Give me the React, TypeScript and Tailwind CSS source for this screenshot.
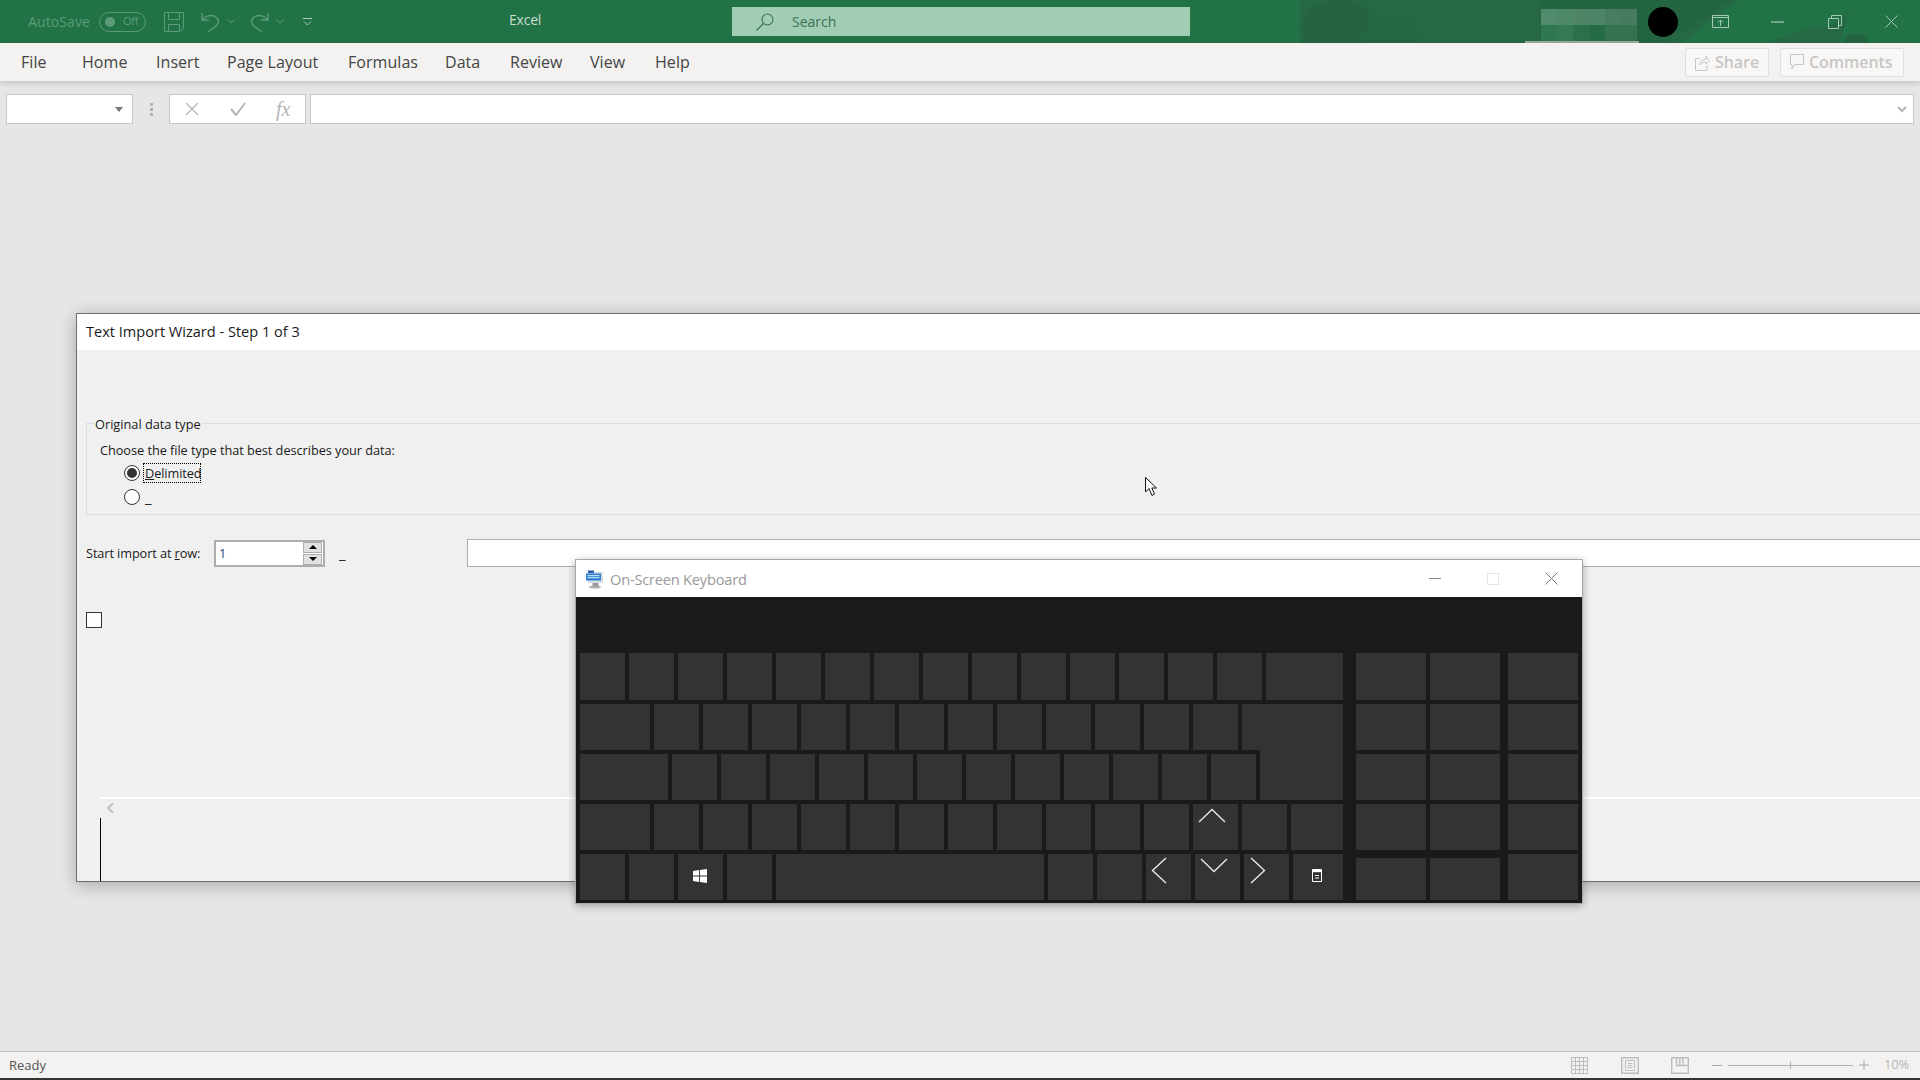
import React from "react";

const FONT = "[font-family:'Open_Sans','Noto_Sans',sans-serif]";

function Key({ w, h = "h-full", extra = "", children }: { w: string; h?: string; extra?: string; children?: React.ReactNode }) {
  return <div className={`relative shrink-0 bg-[#333333] ${w} ${h} ${extra}`}>{children}</div>;
}

const range = (n: number) => Array.from({ length: n }, (_, i) => i);

function Numpad({ short = false }: { short?: boolean }) {
  return (
    <>
      <Key w="w-[70px]" h={short ? "h-[42px]" : "h-full"} extra={short ? "ml-[9px] mt-[4px]" : "ml-[9px]"} />
      <Key w="w-[70px]" h={short ? "h-[42px]" : "h-full"} extra={short ? "mt-[4px]" : ""} />
      <Key w="w-[70px]" extra="ml-[4px]" />
    </>
  );
}

function Keyboard() {
  return (
    <div className="absolute left-[575px] top-[559px] z-20 flex h-[345px] w-[1008px] flex-col border border-[#a9a9a9] shadow-[0_2px_8px_rgba(0,0,0,0.3)]">
      <div className="flex h-[37px] shrink-0 items-center bg-white">
        <svg viewBox="0 0 20 20" className="ml-[9px] h-[20px] w-[20px]">
          <ellipse cx="10" cy="18" rx="6" ry="1.6" fill="#b5b5b5" />
          <rect x="7.5" y="13" width="6" height="4.5" fill="#9a9a9a" />
          <rect x="3" y="3" width="15" height="11" fill="#d7dde3" />
          <rect x="1" y="4.5" width="15" height="7" fill="#2d7fd4" />
          <rect x="2.5" y="6" width="12" height="1.2" fill="#bcdcf6" />
          <rect x="2.5" y="8" width="12" height="1.2" fill="#bcdcf6" />
          <rect x="3" y="1.5" width="6" height="2.5" fill="#2a5da8" />
        </svg>
        <span className={`ml-[5px] mt-[1px] w-[136px] shrink-0 whitespace-nowrap text-[14.6px] leading-none tracking-[-0.2px] text-[#9a9a9a] ${FONT}`}>On-Screen Keyboard</span>
        <svg viewBox="0 0 12 12" className="ml-[683px] h-[12px] w-[12px]">
          <path d="M0 5.5H12" stroke="#8a8a8a" strokeWidth="1" />
        </svg>
        <div className="ml-[46px] h-[12px] w-[12px] border border-[#e3e3e3]" />
        <svg viewBox="0 0 13 13" className="ml-[46px] h-[13px] w-[13px]">
          <path d="M0.5 0.5L12.5 12.5M12.5 0.5L0.5 12.5" stroke="#777" strokeWidth="1" />
        </svg>
      </div>
      <div className="flex flex-1 flex-col gap-[4px] bg-[#1a1a1a] pl-[4px] pt-[56px]">
        <div className="flex h-[47px] gap-[4px]">
          {range(14).map((i) => <Key key={i} w="w-[45px]" />)}
          <Key w="w-[77px]" />
          <Numpad />
        </div>
        <div className="flex h-[46px] gap-[4px]">
          <Key w="w-[70px]" />
          {range(12).map((i) => <Key key={i} w="w-[45px]" />)}
          <Key w="w-[101px]" />
          <Numpad />
        </div>
        <div className="flex h-[46px] gap-[4px]">
          <Key w="w-[88px]" />
          {range(12).map((i) => <Key key={i} w="w-[45px]" />)}
          <Key w="w-[83px]" h="h-[50px]" extra="-mt-[4px]" />
          <Numpad />
        </div>
        <div className="flex h-[46px] gap-[4px]">
          <Key w="w-[70px]" />
          {range(11).map((i) => <Key key={i} w="w-[45px]" />)}
          <Key w="w-[45px]">
            <svg viewBox="0 0 28 15" className="absolute left-[5px] top-[4px] h-[15px] w-[28px]">
              <path d="M1 14L14 1.5L27 14" fill="none" stroke="#e8e8e8" strokeWidth="1.4" />
            </svg>
          </Key>
          <Key w="w-[45px]" />
          <Key w="w-[52px]" />
          <Numpad />
        </div>
        <div className="flex h-[46px] gap-[4px]">
          {range(2).map((i) => <Key key={i} w="w-[45px]" />)}
          <Key w="w-[45px]">
            <svg viewBox="0 0 14 14" className="absolute left-[15px] top-[15px] h-[14px] w-[14px]">
              <path d="M0 2L6 1.1V6.6H0ZM6.9 1L14 0V6.6H6.9ZM0 7.4H6V12.9L0 12ZM6.9 7.4H14V14L6.9 13Z" fill="#fff" />
            </svg>
          </Key>
          <Key w="w-[45px]" />
          <Key w="w-[268px]" />
          <Key w="w-[45px]" />
          <Key w="w-[45px]" />
          <Key w="w-[45px]">
            <svg viewBox="0 0 16 27" className="absolute left-[5px] top-[3px] h-[27px] w-[16px]">
              <path d="M15 1L1.5 13.5L15 26" fill="none" stroke="#e8e8e8" strokeWidth="1.4" />
            </svg>
          </Key>
          <Key w="w-[45px]">
            <svg viewBox="0 0 28 15" className="absolute left-[5px] top-[4px] h-[15px] w-[28px]">
              <path d="M1 1L14 13.5L27 1" fill="none" stroke="#e8e8e8" strokeWidth="1.4" />
            </svg>
          </Key>
          <Key w="w-[45px]">
            <svg viewBox="0 0 16 27" className="absolute left-[6px] top-[3px] h-[27px] w-[16px]">
              <path d="M1 1L14.5 13.5L1 26" fill="none" stroke="#e8e8e8" strokeWidth="1.4" />
            </svg>
          </Key>
          <Key w="w-[50px]">
            <svg viewBox="0 0 10 13" className="absolute left-[19px] top-[15px] h-[13px] w-[10px]">
              <path d="M0.5 0.5H9.5V12.5H0.5Z" fill="none" stroke="#fff" strokeWidth="1" />
              <path d="M0.5 1H9.5V3.2H0.5Z" fill="#fff" />
              <path d="M3 6.5H7M3 9H7" stroke="#fff" strokeWidth="1" />
            </svg>
          </Key>
          <Numpad short />
        </div>
      </div>
    </div>
  );
}

function Radio({ on = false, extra = "" }: { on?: boolean; extra?: string }) {
  return (
    <div className={`flex h-[16px] w-[16px] shrink-0 items-center justify-center rounded-full border border-[#333] bg-white ${extra}`}>
      {on && <div className="h-[10px] w-[10px] rounded-full bg-[#333]" />}
    </div>
  );
}

function Wizard() {
  return (
    <div className={`absolute left-[76px] top-[313px] z-10 flex h-[569px] w-[1860px] flex-col border border-[#6e6e6e] bg-[#f0f0f0] text-[12.75px] leading-[16px] text-[#1a1a1a] shadow-[0_3px_16px_rgba(0,0,0,0.28)] ${FONT}`}>
      <div className="flex h-[36px] shrink-0 items-center bg-white pb-[2px] pl-[9px] text-[14.55px]">
        Text Import Wizard - Step 1 of 3
      </div>
      <div className="flex flex-1 flex-col pl-[9px]">
        <div className="relative mt-[73px] h-[92px] border border-[#dcdcdc] pl-[13px] pt-[18px]">
          <span className="absolute -top-[8px] left-[7px] bg-[#f0f0f0] px-px">Original data type</span>
          <div className="tracking-[-0.05px]">Choose the file type that best describes your data:</div>
          <div className="mt-[5px] flex h-[20px] items-center pl-[24px]">
            <Radio on extra="-mt-[1px]" />
            <span className="ml-[3px] w-[58px] whitespace-nowrap border border-dotted border-black px-px leading-[18px] tracking-[-0.1px]"><span className="underline">D</span>elimited</span>
          </div>
          <div className="mt-[6px] flex h-[16px] items-center pl-[24px]">
            <Radio />
            <span className="ml-[5px] h-[16px] text-[15px] leading-[16px]">_</span>
          </div>
        </div>
        <div className="mt-[24px] flex h-[28px] items-center">
          <span className="w-[114px] shrink-0 whitespace-nowrap tracking-[-0.1px]">Start import at <span className="underline">r</span>ow:</span>
          <div className="ml-[14px] flex h-[27px] w-[111px] shrink-0 items-center justify-between border-2 border-[#adadad] bg-white pl-[3px] pr-[1px]">
            <span className="text-[#1f3a6e]">1</span>
            <div className="flex flex-col gap-px">
              <div className="flex h-[11px] w-[19px] items-center justify-center border border-[#adadad] bg-[#e1e1e1]">
                <div className="h-0 w-0 border-x-[4px] border-b-[4px] border-x-transparent border-b-black" />
              </div>
              <div className="flex h-[11px] w-[19px] items-center justify-center border border-[#adadad] bg-[#e1e1e1]">
                <div className="h-0 w-0 border-x-[4px] border-t-[4px] border-x-transparent border-t-black" />
              </div>
            </div>
          </div>
          <span className="ml-[14px] w-[8px] shrink-0 text-[15px]">_</span>
          <div className="ml-[120px] h-[28px] flex-1 border border-[#adadad] bg-white" />
        </div>
        <div className="mt-[45px] h-[16px] w-[16px] border border-[#333] bg-white" />
        <div className="ml-[14px] mt-[169px] h-[2px] bg-white" />
        <svg viewBox="0 0 8 10" className="ml-[20px] mt-[4px] h-[10px] w-[8px]">
          <path d="M7 0.5L2 5L7 9.5" fill="none" stroke="#c0c0c0" strokeWidth="2" />
        </svg>
        <div className="ml-[14px] mt-[5px] w-[1px] flex-1 bg-black" />
      </div>
    </div>
  );
}

const tabs: [string, string][] = [
  ["File", "w-[61px]"],
  ["Home", "w-[74px]"],
  ["Insert", "w-[71px]"],
  ["Page Layout", "w-[121px]"],
  ["Formulas", "w-[97px]"],
  ["Data", "w-[65px]"],
  ["Review", "w-[80px]"],
  ["View", "w-[65px]"],
  ["Help", "w-[60px]"],
];

function TitleBar() {
  const dim = "#5c9b79";
  return (
    <div className={`relative flex h-[43px] shrink-0 items-center bg-[#217346] ${FONT}`}>
      <svg viewBox="0 0 680 43" className="absolute right-0 top-0 h-[43px] w-[680px]">
        <path d="M60 0H500C480 10 470 25 440 43H60Z" fill="#256843" />
        <ellipse cx="98" cy="26" rx="36" ry="26" fill="#24653f" />
        <ellipse cx="150" cy="34" rx="28" ry="18" fill="#246640" />
        <path d="M300 0H490C470 14 450 30 420 43H300Z" fill="#236540" />
        <ellipse cx="616" cy="42" rx="12" ry="8" fill="#23633f" />
        <path d="M525 43C545 38 560 30 575 28C590 30 600 20 610 8L600 43Z" fill="#256843" />
      </svg>
      <span className="mb-[1px] ml-[28px] w-[62px] shrink-0 whitespace-nowrap text-[14px] tracking-[0.1px] text-[#5c9b79]">AutoSave</span>
      <div className="relative ml-[9px] flex h-[20px] w-[47px] items-center rounded-full border border-[#5c9b79] pl-[5px]">
        <div className="h-[10px] w-[10px] rounded-full bg-[#5c9b79]" />
        <span className="ml-[8px] text-[11px] tracking-[-0.3px] text-[#5c9b79]">Off</span>
      </div>
      <svg viewBox="0 0 20 20" className="ml-[18px] h-[20px] w-[20px]" fill="none" stroke={dim} strokeWidth="1">
        <path d="M0.5 0.5H19.5V16L16 19.5H0.5Z" />
        <path d="M4.5 0.5V7.5H15.5V0.5M4.5 19.5V12.5H15.5V19.5" />
      </svg>
      <svg viewBox="0 0 19 20" className="ml-[17px] h-[20px] w-[19px]" fill="none" stroke={dim} strokeWidth="1.4">
        <path d="M1 1V8H8M1 8C5 3 12 2 16 6C19 10 18 13 7 19.5" />
      </svg>
      <svg viewBox="0 0 8 5" className="ml-[7px] h-[5px] w-[8px]" fill="none" stroke={dim}>
        <path d="M0.5 0.5L4 4L7.5 0.5" />
      </svg>
      <svg viewBox="0 0 19 20" className="ml-[15px] h-[20px] w-[19px]" fill="none" stroke={dim} strokeWidth="1.4">
        <path d="M18 1V8H11M18 8C14 3 7 2 3 6C0 10 1 13 12 19.5" />
      </svg>
      <svg viewBox="0 0 8 5" className="ml-[7px] h-[5px] w-[8px]" fill="none" stroke={dim}>
        <path d="M0.5 0.5L4 4L7.5 0.5" />
      </svg>
      <svg viewBox="0 0 9 8" className="ml-[19px] h-[8px] w-[9px]" fill="none" stroke="#a6c9b5">
        <path d="M0 0.5H9M1 3.5L4.5 7L8 3.5" />
      </svg>
      <span className="mb-[5px] ml-[197px] w-[33px] shrink-0 text-[14px] tracking-[-0.2px] text-[#c9dcd1]">Excel</span>
      <div className="relative ml-[190px] flex h-[29px] w-[458px] items-center bg-[#a0cdb3]">
        <svg viewBox="0 0 18 18" className="ml-[24px] h-[18px] w-[18px]" fill="none" stroke="#3f6f55" strokeWidth="1.1">
          <circle cx="11.5" cy="6.5" r="5.5" />
          <path d="M7.5 10.5L0.5 17.5" />
        </svg>
        <span className="ml-[18px] text-[14px] text-[#3f6f55]">Search</span>
      </div>
      <div className="relative ml-[335px] flex h-[44px] w-[114px] flex-col self-start border-b-[3px] border-[#9aaba0] pl-[16px] pt-[9px]">
        <div className="flex h-[16px] w-[96px]">
          <div className="flex-1 bg-[#4f8b6c]" />
          <div className="flex-1 bg-[#4c8768]" />
          <div className="flex-1 bg-[#4f8566]" />
          <div className="flex-1 bg-[#4e8467]" />
          <div className="flex-1 bg-[#497c60]" />
          <div className="flex-1 bg-[#477b5f]" />
        </div>
        <div className="flex h-[16px] w-[96px]">
          <div className="flex-1 bg-[#2e7750]" />
          <div className="flex-1 bg-[#357a55]" />
          <div className="flex-1 bg-[#2c704b]" />
          <div className="flex-1 bg-[#256c46]" />
          <div className="flex-1 bg-[#33734f]" />
          <div className="flex-1 bg-[#33734f]" />
        </div>
      </div>
      <div className="relative ml-[9px] h-[30px] w-[30px] rounded-full bg-black" />
      <svg viewBox="0 0 17 13" className="relative ml-[34px] h-[13px] w-[17px]" fill="none" stroke="#a6c9b5">
        <path d="M0.5 0.5H16.5V12.5H0.5ZM0.5 2.5H16.5M8.5 11V5M6 7.5L8.5 5L11 7.5" />
      </svg>
      <svg viewBox="0 0 13 2" className="relative ml-[42px] h-[2px] w-[13px]">
        <path d="M0 1H13" stroke="#a6c9b5" strokeWidth="1.2" />
      </svg>
      <svg viewBox="0 0 14 14" className="relative ml-[44px] h-[14px] w-[14px]" fill="none" stroke="#a6c9b5">
        <path d="M0.5 3.5H10.5V13.5H0.5ZM3.5 3.5V0.5H13.5V10.5H10.5" />
      </svg>
      <svg viewBox="0 0 13 13" className="relative ml-[43px] h-[13px] w-[13px]" fill="none" stroke="#a6c9b5">
        <path d="M0.5 0.5L12.5 12.5M12.5 0.5L0.5 12.5" />
      </svg>
    </div>
  );
}

function Ribbon() {
  return (
    <div className={`relative z-[1] flex h-[38px] shrink-0 items-center bg-[#f3f2f1] pl-[21px] text-[16px] tracking-[0.05px] text-[#444444] shadow-[0_2px_6px_rgba(0,0,0,0.16)] ${FONT}`}>
      {tabs.map(([t, w]) => (
        <span key={t} className={`shrink-0 whitespace-nowrap ${w}`}>{t}</span>
      ))}
      <div className="ml-[970px] flex h-[29px] w-[84px] shrink-0 items-center gap-[5px] rounded-[2px] border border-[#e1dfdd] bg-[#f8f7f6] pl-[9px] font-semibold tracking-[-0.05px] text-[#c8c6c4]">
        <svg viewBox="0 0 15 17" className="h-[17px] w-[15px]" fill="none" stroke="#c8c6c4">
          <path d="M5 4.5H0.5V16.5H12V11M4.5 11C5 7 8 5.5 11 5.5V2L14.5 6.5L11 10V8C8 8 6 9 4.5 11Z" />
        </svg>
        <span>Share</span>
      </div>
      <div className="ml-[11px] flex h-[29px] w-[124px] shrink-0 items-center gap-[5px] rounded-[2px] border border-[#e1dfdd] bg-[#f8f7f6] pl-[9px] font-semibold tracking-[-0.05px] text-[#c8c6c4]">
        <svg viewBox="0 0 14 16" className="h-[16px] w-[14px]" fill="none" stroke="#c8c6c4">
          <path d="M0.5 0.5H13.5V10.5H5L2 15V10.5H0.5Z" />
        </svg>
        <span>Comments</span>
      </div>
    </div>
  );
}

function FormulaBar() {
  return (
    <div className="flex h-[30px] items-stretch pl-[6px] pr-[6px]">
      <div className="flex w-[127px] items-center justify-end border border-[#c6c6c6] bg-white pr-[9px]">
        <div className="h-0 w-0 border-x-[4px] border-t-[5px] border-x-transparent border-t-[#777]" />
      </div>
      <div className="ml-[17px] flex flex-col justify-center gap-[2px]">
        <div className="h-[3px] w-[3px] bg-[#b5b5b5]" />
        <div className="h-[3px] w-[3px] bg-[#b5b5b5]" />
        <div className="h-[3px] w-[3px] bg-[#b5b5b5]" />
      </div>
      <div className="ml-[16px] flex w-[137px] items-center border border-[#c6c6c6] bg-white pl-[15px]">
        <svg viewBox="0 0 14 14" className="h-[14px] w-[14px]" fill="none" stroke="#b5b5b5" strokeWidth="1.3">
          <path d="M1 1L13 13M13 1L1 13" />
        </svg>
        <svg viewBox="0 0 16 14" className="ml-[31px] h-[14px] w-[16px]" fill="none" stroke="#b5b5b5" strokeWidth="2">
          <path d="M1 7L6 13L15 1" />
        </svg>
        <span className="ml-[30px] font-['Liberation_Serif',serif] text-[20px] italic leading-none text-[#b5b5b5]">fx</span>
      </div>
      <div className="ml-[4px] flex flex-1 items-center justify-end border border-[#c6c6c6] bg-white pr-[6px]">
        <svg viewBox="0 0 10 7" className="h-[7px] w-[10px]" fill="none" stroke="#b5b5b5" strokeWidth="2">
          <path d="M1 1L5 5L9 1" />
        </svg>
      </div>
    </div>
  );
}

function StatusBar() {
  return (
    <div className={`flex h-[27px] shrink-0 items-center border-t border-[#c6c6c6] bg-[#f3f2f1] pl-[9px] text-[13px] text-[#555] ${FONT}`}>
      <span className="w-[1562px] pt-[1px]">Ready</span>
      <svg viewBox="0 0 17 17" className="h-[17px] w-[17px]" fill="none" stroke="#bdbdbd" strokeWidth="1">
        <path d="M0.5 0.5H16.5V16.5H0.5ZM0.5 4.5H16.5M0.5 8.5H16.5M0.5 12.5H16.5M4.5 0.5V16.5M8.5 0.5V16.5M12.5 0.5V16.5" />
      </svg>
      <svg viewBox="0 0 18 17" className="ml-[33px] h-[17px] w-[18px]" fill="none" stroke="#bdbdbd">
        <path d="M0.5 0.5H17.5V16.5H0.5Z" strokeWidth="2" />
        <path d="M4.5 3.5H13.5V13.5H4.5ZM6.5 6.5H11.5M6.5 8.5H11.5M6.5 10.5H11.5" />
      </svg>
      <svg viewBox="0 0 18 17" className="ml-[32px] h-[17px] w-[18px]" fill="none" stroke="#bdbdbd" strokeWidth="1.4">
        <path d="M0.7 0.7H17.3V16.3H0.7ZM5.5 0.7V8.5H12V0.7M8.8 0.7V8.5M12 8.5H17.3" />
      </svg>
      <div className="ml-[23px] h-[1px] w-[10px] bg-[#a8a8a8]" />
      <div className="relative ml-[6px] h-[1px] w-[125px] bg-[#b0b0b0]">
        <div className="absolute -top-[3px] left-[62px] h-[7px] w-[1px] bg-[#b0b0b0]" />
      </div>
      <svg viewBox="0 0 10 10" className="ml-[6px] h-[10px] w-[10px]" stroke="#a8a8a8">
        <path d="M0 5H10M5 0V10" />
      </svg>
      <span className="ml-[15px] tracking-[-0.2px] text-[#b5b5b5]">10%</span>
    </div>
  );
}

export default function App() {
  return (
    <div className="relative flex h-[1080px] w-[1920px] flex-col overflow-hidden bg-[#e6e6e6]">
      <TitleBar />
      <Ribbon />
      <div className="flex-1 pt-[13px]">
        <FormulaBar />
      </div>
      <Wizard />
      <Keyboard />
      <svg viewBox="0 0 12 19" className="absolute left-[1145px] top-[477px] z-10 h-[19px] w-[12px]">
        <path d="M0.5 0.5V15L4 11.5L7 18.5L9.5 17L6.8 11H11.5Z" fill="#fff" stroke="#111" strokeWidth="1" />
      </svg>
      <StatusBar />
      <div className="h-[2px] shrink-0 bg-[#333]" />
    </div>
  );
}
